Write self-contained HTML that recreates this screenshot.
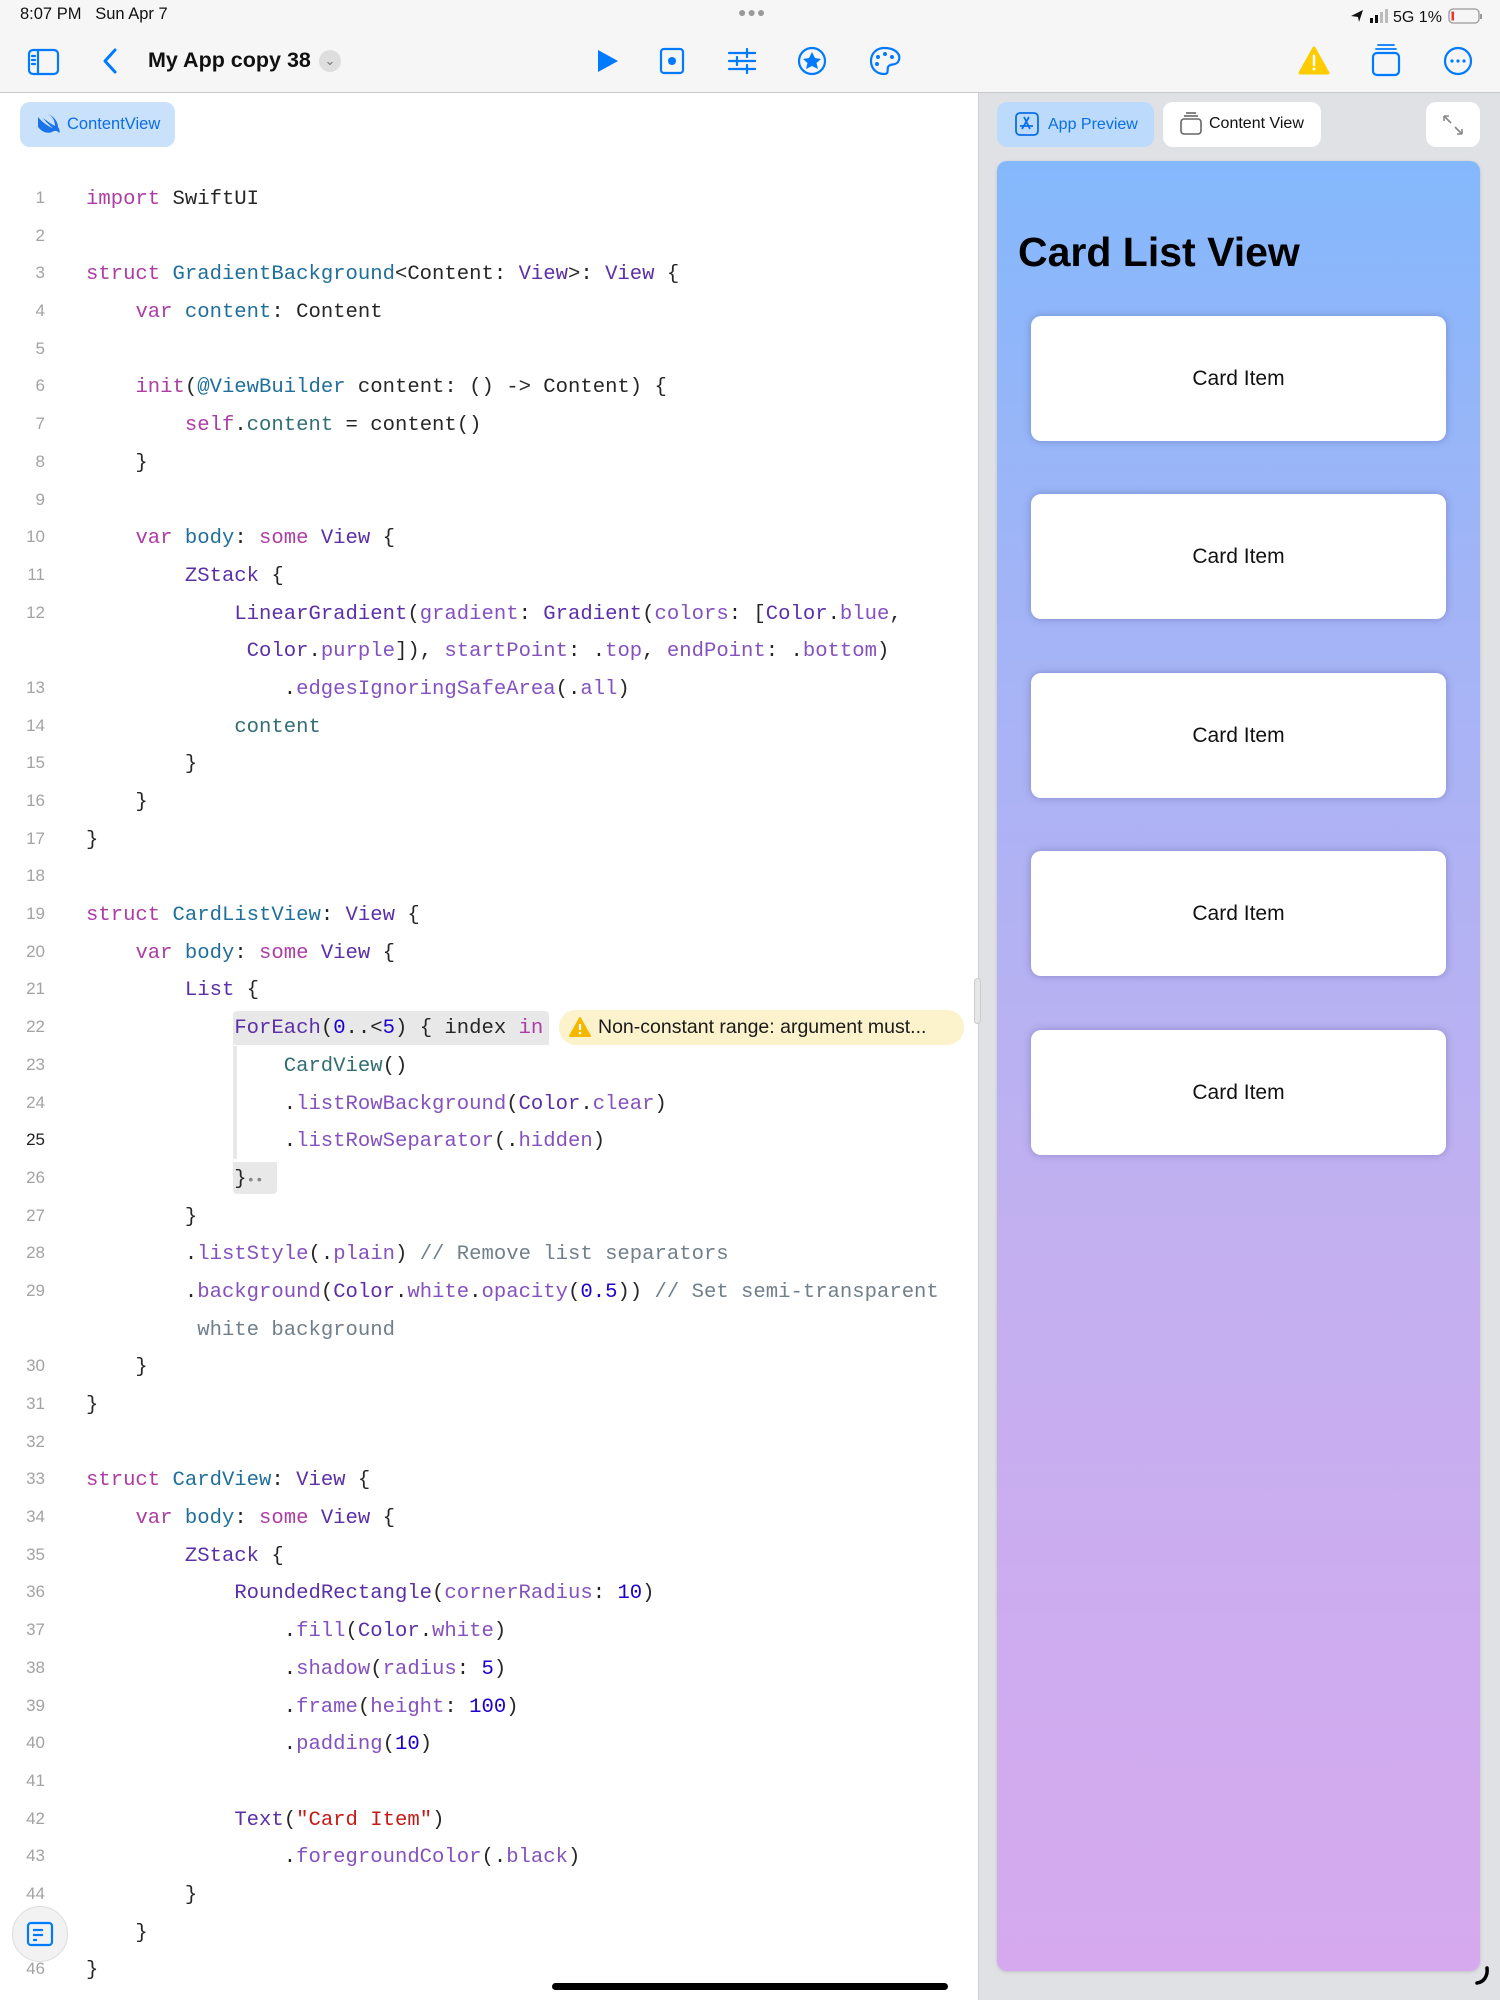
<!DOCTYPE html>
<html><head><meta charset="utf-8">
<style>
*{margin:0;padding:0;box-sizing:border-box}
body{width:1500px;height:2000px;position:relative;background:#fff;font-family:"Liberation Sans",sans-serif;overflow:hidden}
.abs{position:absolute}
#top{left:0;top:0;width:1500px;height:93px;background:#f6f6f6;border-bottom:1.5px solid #c9c9c9}
#right{left:978px;top:93px;width:522px;height:1907px;background:#dfe1e5;border-left:1px solid #cfd1d5}
.code{position:absolute;left:0;top:179px;width:978px}
.r{height:37.7px;line-height:37.7px;position:relative;white-space:pre;font-family:"Liberation Mono",monospace;font-size:20.6px;color:#262626}
.r .ln{position:absolute;left:0;top:0;width:45px;text-align:right;font-family:"Liberation Sans",sans-serif;font-size:17px;color:#a3a3a3}
.r .tx{position:absolute;left:86px;top:2px}
.k{color:#ad3da4}.d{color:#1f6f9a}.t{color:#5b2fa8}.m{color:#8551bf}.p{color:#326d74}.n{color:#1c00cf}.s{color:#c41a16}.c{color:#707f8c}
.card{position:absolute;left:1031px;width:415px;height:125px;background:#fff;border-radius:10px;box-shadow:0 0 8px rgba(60,60,120,.35);text-align:center;line-height:125px;font-size:21px;color:#111}
</style></head><body>
<div id="top" class="abs"></div>
<div class="abs" style="left:20px;top:5px;font-size:16.5px;color:#111">8:07 PM&nbsp;&nbsp;&nbsp;Sun Apr 7</div>
<div class="abs" style="left:738px;top:4px;font-size:14px;color:#999;letter-spacing:1px">●●●</div>
<svg class="abs" style="left:1348px;top:6px" width="145" height="20">
<path d="M3 10 L15 4 L11 16 L10 11 Z" fill="#111"/>
<rect x="22" y="12" width="3" height="5" fill="#111"/><rect x="27" y="9" width="3" height="8" fill="#111"/><rect x="32" y="6" width="3" height="11" fill="#bbb"/><rect x="37" y="3" width="3" height="14" fill="#bbb"/>
<text x="45" y="16" font-family="Liberation Sans" font-size="16" fill="#111">5G 1%</text>
<rect x="101" y="3" width="30" height="14" rx="4" fill="none" stroke="#999" stroke-width="1.3"/><rect x="103.5" y="5.5" width="2.5" height="9" fill="#e33"/><rect x="132" y="8" width="2" height="5" fill="#999"/>
</svg>
<svg class="abs" style="left:0;top:38px" width="1500" height="48" fill="none" stroke="#007aff" stroke-width="2.2" stroke-linecap="round" stroke-linejoin="round">
<rect x="29" y="12" width="29" height="24" rx="4"/><line x1="38" y1="12" x2="38" y2="36"/><line x1="32" y1="18" x2="35" y2="18"/><line x1="32" y1="22" x2="35" y2="22"/><line x1="32" y1="26" x2="35" y2="26"/>
<path d="M115 12 L105 23 L115 34" stroke-width="3"/>
<path d="M598 12 L618 23 L598 34 Z" fill="#007aff" stroke="none"/>
<rect x="661" y="11" width="22" height="24" rx="3"/><circle cx="672" cy="23" r="4" fill="#007aff" stroke="none"/>
<line x1="729" y1="15" x2="755" y2="15"/><line x1="729" y1="23" x2="755" y2="23"/><line x1="729" y1="31" x2="755" y2="31"/><line x1="747" y1="11" x2="747" y2="19"/><line x1="737" y1="19" x2="737" y2="27"/><line x1="747" y1="27" x2="747" y2="35"/>
<circle cx="812" cy="23" r="13"/><path d="M812 14 L815 20 L821 21 L816.5 25 L818 31 L812 28 L806 31 L807.5 25 L803 21 L809 20 Z" fill="#007aff" stroke="none"/>
<path d="M884 10 C897 10 902 18 898 24 C895 28 890 25 888 29 C887 33 889 36 884 36 C876 36 871 30 871 23 C871 15 877 10 884 10 Z"/><circle cx="878" cy="19" r="2" fill="#007aff" stroke="none"/><circle cx="885" cy="16" r="2" fill="#007aff" stroke="none"/><circle cx="892" cy="19" r="2" fill="#007aff" stroke="none"/><circle cx="877" cy="26" r="2" fill="#007aff" stroke="none"/>
<path d="M1314 10 L1328 35 L1300 35 Z" fill="#ffcc00" stroke="#ffcc00" stroke-width="3"/><line x1="1314" y1="18" x2="1314" y2="27" stroke="#fff" stroke-width="2.5"/><circle cx="1314" cy="31" r="1.5" fill="#fff" stroke="none"/>
<line x1="1378" y1="7" x2="1394" y2="7" stroke-width="1.8"/><line x1="1376" y1="11" x2="1396" y2="11" stroke-width="1.8"/><rect x="1373" y="15" width="26" height="22" rx="4"/>
<circle cx="1458" cy="23" r="13"/><circle cx="1452" cy="23" r="1.6" fill="#007aff" stroke="none"/><circle cx="1458" cy="23" r="1.6" fill="#007aff" stroke="none"/><circle cx="1464" cy="23" r="1.6" fill="#007aff" stroke="none"/>
</svg>
<div class="abs" style="left:148px;top:48px;font-size:21.5px;font-weight:bold;color:#111">My App copy 38</div>
<div class="abs" style="left:319px;top:50px;width:22px;height:22px;border-radius:11px;background:#dedede;color:#777;font-size:13px;text-align:center;line-height:22px">⌄</div>

<div class="abs" style="left:20px;top:102px;width:155px;height:45px;border-radius:10px;background:#c9e1fb"></div>
<svg class="abs" style="left:36px;top:113px" width="26" height="22"><path d="M2 4 C7 10 13 14 17 15 C13 12 9 8 7 5 C11 8 15 11 19 13 C19 7 16 3 12 1 C17 3 22 8 22 14 C24 17 24 19 23 20 C22 18 19 17 16 19 C11 21 6 19 2 14 Z" fill="#1a73e8"/></svg>
<div class="abs" style="left:67px;top:115px;font-size:16.5px;color:#0a6ee6">ContentView</div>

<div class="code">
<div class="r"><span class="ln">1</span><span class="tx"><span class="k">import</span> SwiftUI</span></div>
<div class="r"><span class="ln">2</span></div>
<div class="r"><span class="ln">3</span><span class="tx"><span class="k">struct</span> <span class="d">GradientBackground</span>&lt;Content: <span class="t">View</span>&gt;: <span class="t">View</span> {</span></div>
<div class="r"><span class="ln">4</span><span class="tx">    <span class="k">var</span> <span class="d">content</span>: Content</span></div>
<div class="r"><span class="ln">5</span></div>
<div class="r"><span class="ln">6</span><span class="tx">    <span class="k">init</span>(<span class="d">@ViewBuilder</span> content: () -&gt; Content) {</span></div>
<div class="r"><span class="ln">7</span><span class="tx">        <span class="k">self</span>.<span class="p">content</span> = content()</span></div>
<div class="r"><span class="ln">8</span><span class="tx">    }</span></div>
<div class="r"><span class="ln">9</span></div>
<div class="r"><span class="ln">10</span><span class="tx">    <span class="k">var</span> <span class="d">body</span>: <span class="k">some</span> <span class="t">View</span> {</span></div>
<div class="r"><span class="ln">11</span><span class="tx">        <span class="t">ZStack</span> {</span></div>
<div class="r"><span class="ln">12</span><span class="tx">            <span class="t">LinearGradient</span>(<span class="m">gradient</span>: <span class="t">Gradient</span>(<span class="m">colors</span>: [<span class="t">Color</span>.<span class="m">blue</span>,</span></div>
<div class="r"><span class="tx">             <span class="t">Color</span>.<span class="m">purple</span>]), <span class="m">startPoint</span>: .<span class="m">top</span>, <span class="m">endPoint</span>: .<span class="m">bottom</span>)</span></div>
<div class="r"><span class="ln">13</span><span class="tx">                .<span class="m">edgesIgnoringSafeArea</span>(.<span class="m">all</span>)</span></div>
<div class="r"><span class="ln">14</span><span class="tx">            <span class="p">content</span></span></div>
<div class="r"><span class="ln">15</span><span class="tx">        }</span></div>
<div class="r"><span class="ln">16</span><span class="tx">    }</span></div>
<div class="r"><span class="ln">17</span><span class="tx">}</span></div>
<div class="r"><span class="ln">18</span></div>
<div class="r"><span class="ln">19</span><span class="tx"><span class="k">struct</span> <span class="d">CardListView</span>: <span class="t">View</span> {</span></div>
<div class="r"><span class="ln">20</span><span class="tx">    <span class="k">var</span> <span class="d">body</span>: <span class="k">some</span> <span class="t">View</span> {</span></div>
<div class="r"><span class="ln">21</span><span class="tx">        <span class="t">List</span> {</span></div>
<div class="r"><span class="ln">22</span><span class="abs" style="left:233px;top:3px;width:316px;height:34px;background:#e8e8e8;border-radius:4px 4px 0 0"></span><span class="tx">            <span class="t">ForEach</span>(<span class="n">0</span>..&lt;<span class="n">5</span>) { index <span class="k">in</span></span><span class="abs" style="left:559px;top:2px;width:405px;height:35px;background:#fcf2cc;border-radius:17px;font-family:'Liberation Sans',sans-serif;font-size:19.5px;line-height:35px;color:#1a1a1a;padding-left:39px">Non-constant range: argument must...</span><svg class="abs" style="left:569px;top:9px" width="22" height="20"><path d="M11 1 L21 19 L1 19 Z" fill="#f5b800" stroke="#f5b800" stroke-linejoin="round" stroke-width="2"/><line x1="11" y1="7" x2="11" y2="13" stroke="#fff" stroke-width="2.2"/><circle cx="11" cy="16" r="1.3" fill="#fff"/></svg></div>
<div class="r"><span class="ln">23</span><span class="abs" style="left:233px;top:0;width:4px;height:38px;background:#e8e8e8"></span><span class="tx">                <span class="p">CardView</span>()</span></div>
<div class="r"><span class="ln">24</span><span class="abs" style="left:233px;top:0;width:4px;height:38px;background:#e8e8e8"></span><span class="tx">                .<span class="m">listRowBackground</span>(<span class="t">Color</span>.<span class="m">clear</span>)</span></div>
<div class="r"><span class="ln" style="color:#222">25</span><span class="abs" style="left:233px;top:0;width:4px;height:38px;background:#e8e8e8"></span><span class="tx">                .<span class="m">listRowSeparator</span>(.<span class="m">hidden</span>)</span></div>
<div class="r"><span class="ln">26</span><span class="abs" style="left:233px;top:3px;width:44px;height:32px;background:#e8e8e8;border-radius:0 0 4px 4px"></span><span class="tx">            }<span style="color:#888;font-size:14px">••</span></span></div>
<div class="r"><span class="ln">27</span><span class="tx">        }</span></div>
<div class="r"><span class="ln">28</span><span class="tx">        .<span class="m">listStyle</span>(.<span class="m">plain</span>) <span class="c">// Remove list separators</span></span></div>
<div class="r"><span class="ln">29</span><span class="tx">        .<span class="m">background</span>(<span class="t">Color</span>.<span class="m">white</span>.<span class="m">opacity</span>(<span class="n">0.5</span>)) <span class="c">// Set semi-transparent</span></span></div>
<div class="r"><span class="tx">         <span class="c">white background</span></span></div>
<div class="r"><span class="ln">30</span><span class="tx">    }</span></div>
<div class="r"><span class="ln">31</span><span class="tx">}</span></div>
<div class="r"><span class="ln">32</span></div>
<div class="r"><span class="ln">33</span><span class="tx"><span class="k">struct</span> <span class="d">CardView</span>: <span class="t">View</span> {</span></div>
<div class="r"><span class="ln">34</span><span class="tx">    <span class="k">var</span> <span class="d">body</span>: <span class="k">some</span> <span class="t">View</span> {</span></div>
<div class="r"><span class="ln">35</span><span class="tx">        <span class="t">ZStack</span> {</span></div>
<div class="r"><span class="ln">36</span><span class="tx">            <span class="t">RoundedRectangle</span>(<span class="m">cornerRadius</span>: <span class="n">10</span>)</span></div>
<div class="r"><span class="ln">37</span><span class="tx">                .<span class="m">fill</span>(<span class="t">Color</span>.<span class="m">white</span>)</span></div>
<div class="r"><span class="ln">38</span><span class="tx">                .<span class="m">shadow</span>(<span class="m">radius</span>: <span class="n">5</span>)</span></div>
<div class="r"><span class="ln">39</span><span class="tx">                .<span class="m">frame</span>(<span class="m">height</span>: <span class="n">100</span>)</span></div>
<div class="r"><span class="ln">40</span><span class="tx">                .<span class="m">padding</span>(<span class="n">10</span>)</span></div>
<div class="r"><span class="ln">41</span></div>
<div class="r"><span class="ln">42</span><span class="tx">            <span class="t">Text</span>(<span class="s">"Card Item"</span>)</span></div>
<div class="r"><span class="ln">43</span><span class="tx">                .<span class="m">foregroundColor</span>(.<span class="m">black</span>)</span></div>
<div class="r"><span class="ln">44</span><span class="tx">        }</span></div>
<div class="r"><span class="ln">45</span><span class="tx">    }</span></div>
<div class="r"><span class="ln">46</span><span class="tx">}</span></div>
</div>
<div class="abs" style="left:12px;top:1906px;width:56px;height:56px;border-radius:28px;background:#f2f2f2;border:1px solid #ddd"></div>
<svg class="abs" style="left:26px;top:1921px" width="28" height="26" fill="none" stroke="#007aff" stroke-width="2.2"><rect x="2" y="2" width="24" height="22" rx="3"/><line x1="7" y1="9" x2="17" y2="9"/><line x1="7" y1="14" x2="17" y2="14"/><line x1="7" y1="19" x2="11" y2="19"/></svg>
<div class="abs" style="left:552px;top:1983px;width:396px;height:7px;border-radius:4px;background:#000"></div>

<div id="right" class="abs"></div>
<div class="abs" style="left:974px;top:978px;width:7px;height:46px;border-radius:4px;background:#e6e6e6;border:1px solid #ccc"></div>
<div class="abs" style="left:997px;top:102px;width:157px;height:45px;border-radius:10px;background:#bcdafc"></div>
<svg class="abs" style="left:1015px;top:112px" width="24" height="24" fill="none" stroke="#0a6ee6" stroke-width="1.8"><rect x="1" y="1" width="22" height="22" rx="4"/><path d="M9 5 L15 17 M14 5 L7 17 M5 14 L18 14"/></svg>
<div class="abs" style="left:1048px;top:116px;font-size:16px;color:#0a6ee6">App Preview</div>
<div class="abs" style="left:1163px;top:102px;width:158px;height:45px;border-radius:10px;background:#fff"></div>
<svg class="abs" style="left:1179px;top:111px" width="24" height="24" fill="none" stroke="#666" stroke-width="1.6"><line x1="7" y1="2" x2="17" y2="2"/><line x1="5" y1="5" x2="19" y2="5"/><rect x="2" y="8" width="20" height="15" rx="3"/></svg>
<div class="abs" style="left:1209px;top:115px;font-size:16px;color:#111">Content View</div>
<div class="abs" style="left:1426px;top:102px;width:54px;height:45px;border-radius:10px;background:#fff"></div>
<svg class="abs" style="left:1442px;top:114px" width="22" height="22" fill="none" stroke="#888" stroke-width="1.6"><path d="M2 2 L9 9 M2 2 L2 7 M2 2 L7 2 M20 20 L13 13 M20 20 L20 15 M20 20 L15 20"/></svg>
<div class="abs" style="left:997px;top:161px;width:483px;height:1810px;border-radius:10px;background:linear-gradient(#84b8fc,#a3b4f6 25%,#c3b0f0 60%,#d6a9ee);box-shadow:0 1px 3px rgba(0,0,0,.15)"></div>
<div class="abs" style="left:1018px;top:229px;font-size:41px;font-weight:bold;color:#000">Card List View</div>
<div class="card" style="top:316px">Card Item</div>
<div class="card" style="top:494px">Card Item</div>
<div class="card" style="top:673px">Card Item</div>
<div class="card" style="top:851px">Card Item</div>
<div class="card" style="top:1030px">Card Item</div>
<svg class="abs" style="left:1474px;top:1966px" width="16" height="20"><path d="M13 2 C14 10 10 16 3 17" fill="none" stroke="#000" stroke-width="3.5" stroke-linecap="round"/></svg>
</body></html>
